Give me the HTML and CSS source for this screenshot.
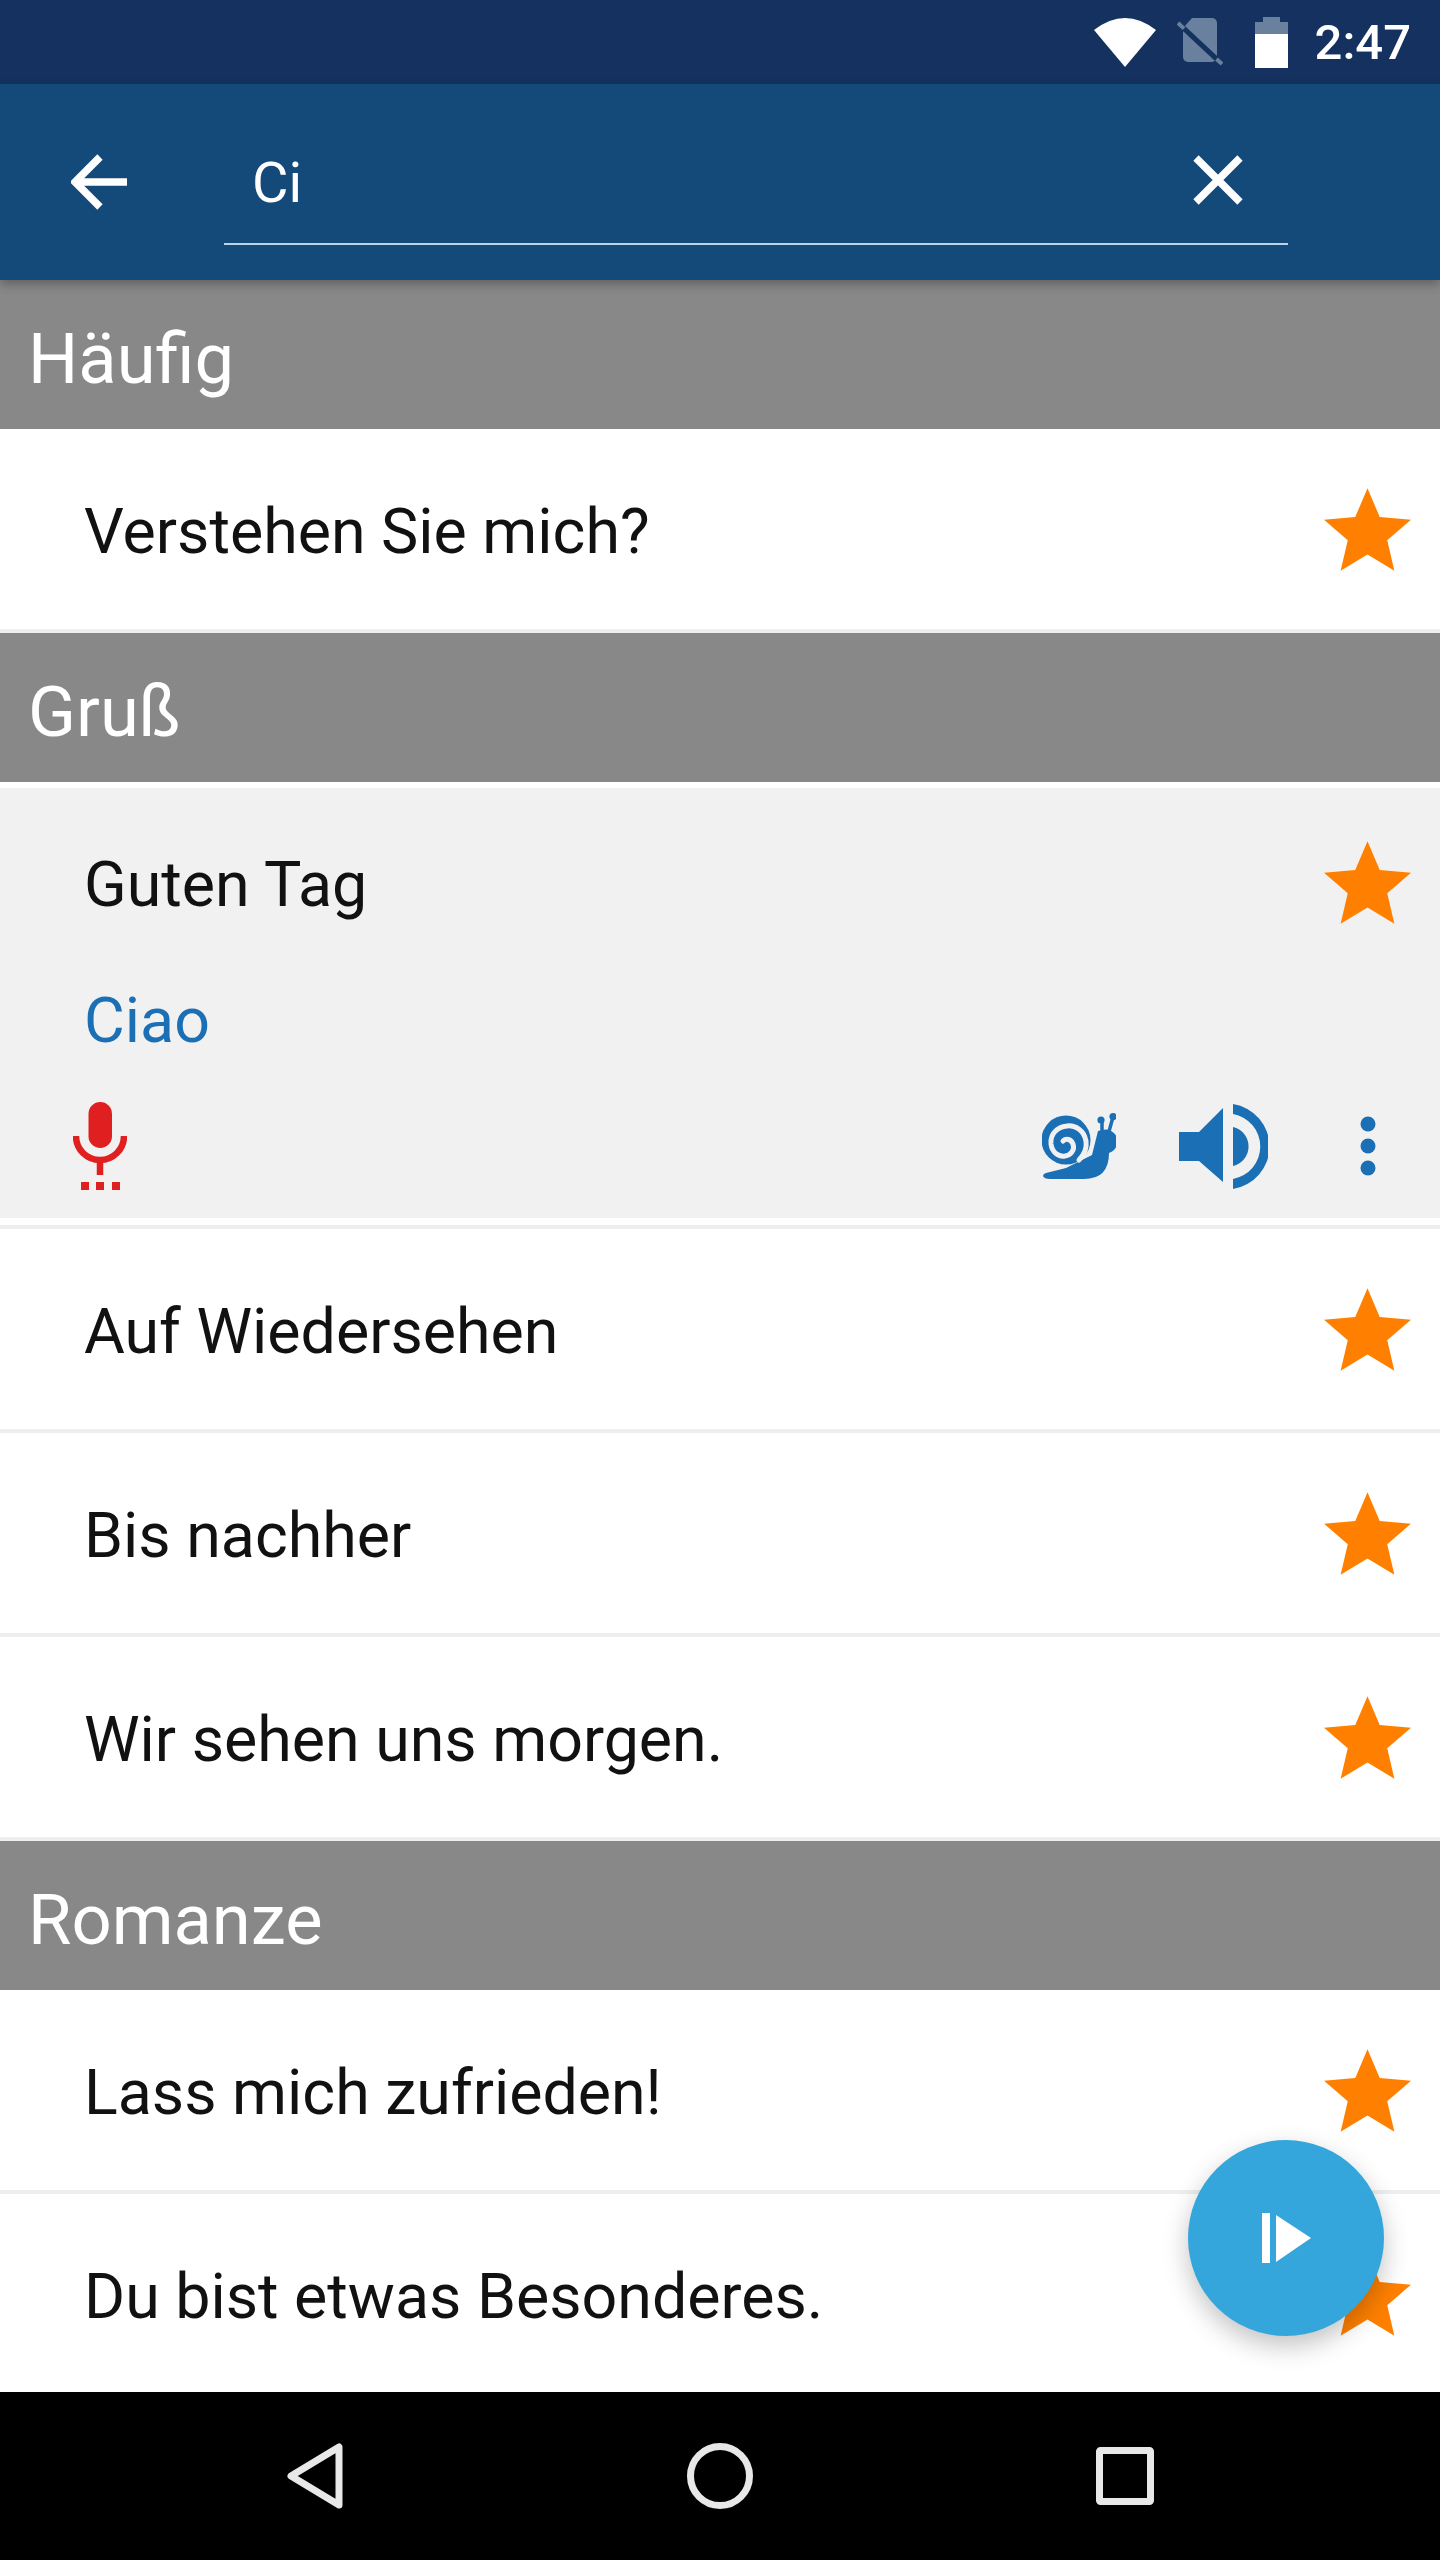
FILE: index.html
```html
<!DOCTYPE html>
<html lang="de">
<head>
  <meta charset="UTF-8">
  <meta name="viewport" content="width=device-width, initial-scale=1.0">
  <title>Phrasebook search</title>
  <link rel="stylesheet" href="styles.css">
</head>
<body>
  <svg class="defs" width="0" height="0">
    <symbol id="star" viewBox="2 2 20 19">
      <path d="M12 17.27L18.18 21l-1.64-7.03L22 9.24l-7.19-.61L12 2 9.19 8.63 2 9.24l5.46 4.73L5.82 21z"/>
    </symbol>
  </svg>

  <main class="app">
    <div class="status">
      <svg class="wifi" width="62" height="49" viewBox="0 0 62 49"><path d="M0 12Q31-12 62 12L31 49z"/></svg>
      <svg class="sim" width="46" height="48" viewBox="0 0 46 48">
        <path class="sim-body" d="M15 0H35a5 5 0 0 1 5 5V39a5 5 0 0 1-5 5H11a5 5 0 0 1-5-5V10z"/>
        <path class="sim-cut" d="M6 9.6L40 41.4"/>
        <path class="sim-tail" d="M1 5L7 10.6M39.5 41L45 46"/>
      </svg>
      <svg class="battery" width="33" height="51" viewBox="0 0 33 51">
        <path class="battery-empty" d="M8 0H25V5H33V17H0V5H8z"/>
        <rect y="17" width="33" height="34"/>
      </svg>
      <span class="time">2:47</span>
    </div>

    <header class="toolbar">
      <svg class="back" width="56" height="56" viewBox="0 0 56 56"><path d="M56 28H4M29 3L4 28L29 53"/></svg>
      <div class="search">
        <span class="query">Ci</span>
        <svg class="clear" width="50" height="50" viewBox="0 0 50 50"><path d="M3 3L47 47M47 3L3 47"/></svg>
      </div>
    </header>

    <div class="list">
      <h2 class="section">Häufig</h2>
      <div class="row"><span>Verstehen Sie mich?</span><svg class="star"><use href="#star"/></svg></div>

      <h2 class="section">Gruß</h2>
      <div class="open">
        <div class="open-top"><span>Guten Tag</span><svg class="star"><use href="#star"/></svg></div>
        <div class="translation">Ciao</div>
        <div class="tools">
          <svg class="mic" width="54" height="88" viewBox="0 0 54 88">
            <rect x="15.5" width="23.5" height="46" rx="11.7"/>
            <path class="mic-arc" d="M3 34A24 24 0 0 0 51 34M27 58V73"/>
            <rect x="8" y="80" width="8" height="8"/>
            <rect x="23" y="80" width="8" height="8"/>
            <rect x="39" y="80" width="8" height="8"/>
          </svg>
          <svg class="snail" width="74" height="66" viewBox="0 0 74 66">
            <circle cx="24" cy="27" r="24.5"/>
            <path d="M1 63Q1 60 8 59L24 55L50 42L56 18L60 17A8 8 0 0 1 67 40Q67 66 42 66H8Q2 66 1 63z"/>
            <path class="snail-horn" d="M60 20V7M66 22L71 4"/>
            <circle cx="59" cy="7" r="3.6"/>
            <circle cx="71" cy="3.6" r="3.6"/>
            <path class="snail-shell" d="M37 47C43 41 45 35 44 28C42 17 33 12 25 13C15 14 8 21 9 31C10 39 16 44 23 43C29 42 33 37 31 31C29 26 24 25 21 28"/>
          </svg>
          <svg class="speaker" width="89" height="85" viewBox="0 0 89 85">
            <path d="M0 28H20L44 4V78L20 57H0z"/>
            <path d="M54 23A20 20 0 0 1 54 62z"/>
            <path d="M54 0A43 43 0 0 1 54 85V75A33 33 0 0 0 54 10z"/>
          </svg>
          <svg class="more" width="16" height="60" viewBox="0 0 16 60">
            <circle cx="8" cy="8" r="7.5"/>
            <circle cx="8" cy="30" r="7.5"/>
            <circle cx="8" cy="52" r="7.5"/>
          </svg>
        </div>
      </div>
      <div class="row"><span>Auf Wiedersehen</span><svg class="star"><use href="#star"/></svg></div>
      <div class="row"><span>Bis nachher</span><svg class="star"><use href="#star"/></svg></div>
      <div class="row"><span>Wir sehen uns morgen.</span><svg class="star"><use href="#star"/></svg></div>

      <h2 class="section">Romanze</h2>
      <div class="row"><span>Lass mich zufrieden!</span><svg class="star"><use href="#star"/></svg></div>
      <div class="row"><span>Du bist etwas Besonderes.</span><svg class="star"><use href="#star"/></svg></div>

      <button class="fab">
        <svg width="49" height="50" viewBox="0 0 49 50"><rect width="8" height="50"/><path d="M14 2L49 25L14 49z"/></svg>
      </button>
    </div>

    <nav class="nav">
      <svg width="56" height="66" viewBox="0 0 56 66"><path d="M52 4V62L4 33z"/></svg>
      <svg width="66" height="66" viewBox="0 0 66 66"><circle cx="33" cy="33" r="29.5"/></svg>
      <svg width="58" height="58" viewBox="0 0 58 58"><rect x="3.5" y="3.5" width="51" height="51" rx="1"/></svg>
    </nav>
  </main>
</body>
</html>
```

FILE: styles.css
```css
* {
  box-sizing: border-box;
}
body {
  margin: 0;
  font-family: Roboto, "Noto Sans", sans-serif;
  color: #111;
  background: #fff;
}
.defs {
  position: absolute;
}
.app {
  display: flex;
  flex-direction: column;
  height: 2560px;
  overflow: hidden;
}

/* status bar */
.status {
  display: flex;
  justify-content: flex-end;
  align-items: center;
  flex: none;
  height: 84px;
  padding-right: 29px;
  background: #14315f;
  color: #fff;
  fill: #fff;
}
.sim {
  margin-left: 21px;
}
.sim-body {
  fill: #69809f;
}
.sim-cut {
  fill: none;
  stroke: #14315f;
  stroke-width: 5;
}
.sim-tail {
  fill: none;
  stroke: #69809f;
  stroke-width: 4;
}
.battery {
  margin-left: 32px;
}
.battery-empty {
  fill: #69809f;
}
.time {
  margin-left: 27px;
  font-size: 49px;
  font-weight: 500;
}

/* search toolbar */
.toolbar {
  position: relative;
  z-index: 1;
  display: flex;
  align-items: center;
  flex: none;
  height: 196px;
  padding-left: 71px;
  background: #144a7a;
  box-shadow: 0 4px 10px rgba(0, 0, 0, 0.3);
}
.back, .clear {
  fill: none;
  stroke: #fff;
  stroke-width: 7.5;
}
.search {
  display: flex;
  justify-content: space-between;
  align-items: center;
  width: 1064px;
  height: 126px;
  margin-left: 97px;
  padding: 0 45px 0 28px;
  border-bottom: 2px solid #b9d3ea;
  color: #fff;
  font-size: 56px;
}
.query {
  padding-top: 3px;
}
.clear {
  margin-bottom: 3px;
}

/* list */
.list {
  position: relative;
  flex: 1;
  overflow: hidden;
}
.section {
  height: 149px;
  margin: 0;
  padding: 5px 0 0 28px;
  background: #888;
  color: #fff;
  font-size: 70.5px;
  font-weight: 400;
  line-height: 148px;
}
.row, .open-top {
  display: flex;
  justify-content: space-between;
  align-items: center;
  padding: 0 29px 0 84px;
  font-size: 62.7px;
}
.row span, .open-top span {
  padding-top: 4px;
}
.row {
  height: 204px;
  border-bottom: 4px solid #eee;
}
.star {
  width: 87px;
  height: 83px;
  fill: #ff8000;
}
.open {
  height: 441px;
  margin-top: 6px;
  border-bottom: 4px solid #eee;
  background: linear-gradient(#f1f1f1 430px, #fff 430px);
}
.open-top {
  height: 189px;
}
.translation {
  padding: 2px 0 0 84px;
  color: #1b6fb5;
  font-size: 62.7px;
  line-height: 84px;
}
.tools {
  display: flex;
  align-items: center;
  height: 96px;
  margin-top: 35px;
  padding-left: 73px;
  fill: #1b6fb5;
}
.mic {
  fill: #e02020;
}
.mic-arc {
  fill: none;
  stroke: #e02020;
  stroke-width: 6.5;
}
.snail {
  margin-left: auto;
}
.snail-horn {
  fill: none;
  stroke: #1b6fb5;
  stroke-width: 3.5;
}
.snail-shell {
  fill: none;
  stroke: #f1f1f1;
  stroke-width: 5;
  stroke-linecap: round;
}
.speaker {
  margin-left: 63px;
}
.more {
  margin: 0 64px 0 92px;
}
.fab {
  position: absolute;
  left: 1188px;
  top: 1860px;
  display: flex;
  justify-content: center;
  align-items: center;
  width: 196px;
  height: 196px;
  padding: 0;
  border: 0;
  border-radius: 50%;
  background: #34a6db;
  box-shadow: 0 10px 26px rgba(0, 0, 0, 0.24);
  fill: #fff;
}

/* android nav */
.nav {
  display: grid;
  grid-template-columns: repeat(3, 405px);
  justify-content: center;
  justify-items: center;
  align-items: center;
  flex: none;
  height: 168px;
  background: #000;
  fill: none;
  stroke: #e8e8e8;
  stroke-width: 7;
  stroke-linejoin: round;
}
```
